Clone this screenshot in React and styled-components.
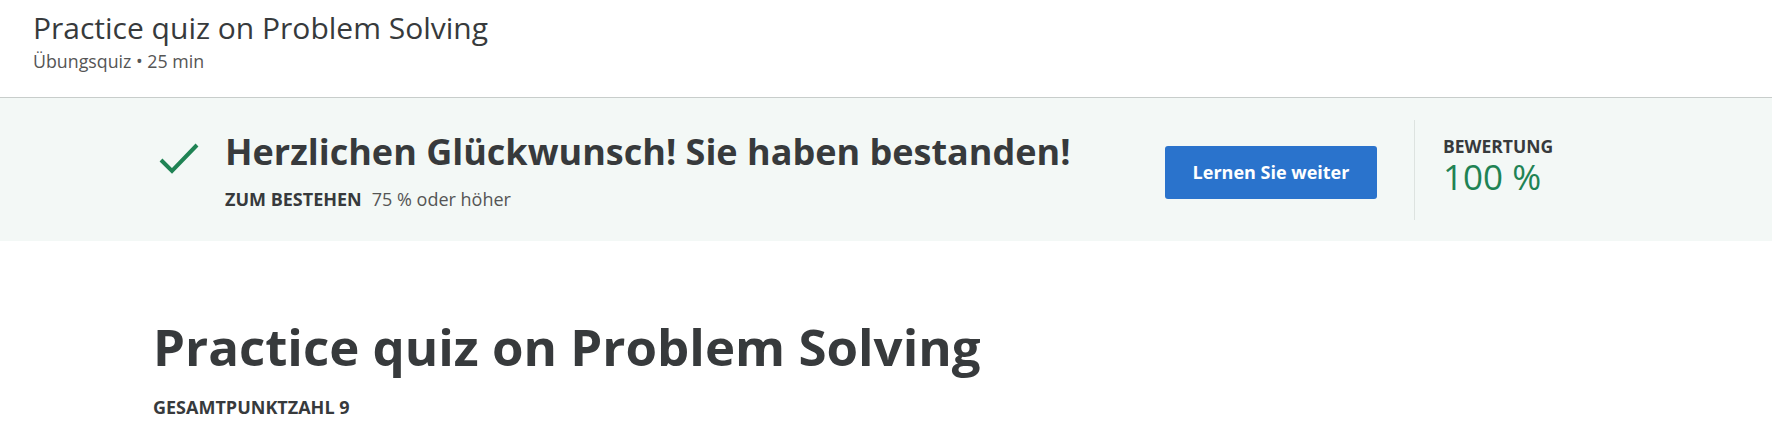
import React from 'react';
import styled, { createGlobalStyle } from 'styled-components';

const GlobalStyle = createGlobalStyle`
  html, body {
    margin: 0;
    padding: 0;
    background: #fff;
    font-family: "Open Sans", "Liberation Sans", sans-serif;
    color: #373a3c;
  }
`;

const Header = styled.header`
  padding: 10px 33px 24px;
  border-bottom: 1px solid #c8cdcb;
`;

const HeaderTitle = styled.h1`
  margin: 0;
  font-size: 30px;
  line-height: 36px;
  font-weight: 400;
  color: #373a3c;
`;

const HeaderMeta = styled.div`
  margin-top: 3px;
  font-size: 17.8px;
  line-height: 24px;
  color: #555;
`;

const Banner = styled.section`
  background: #f3f8f6;
  height: 143px;
  display: flex;
  align-items: center;
`;

const Container = styled.div`
  width: 1466px;
  margin: 0 auto;
  display: flex;
  align-items: center;
`;

const Result = styled.div`
  flex: 1;
  display: flex;
  align-items: flex-start;
  gap: 25px;
  padding-left: 5px;
`;

const CheckIcon = styled.svg`
  width: 42px;
  height: 34px;
  margin-top: 11px;
  flex-shrink: 0;
`;

const ResultTitle = styled.h2`
  margin: 0;
  font-size: 36px;
  line-height: 44px;
  font-weight: 700;
  color: #373a3c;
`;

const PassLine = styled.div`
  margin-top: 14px;
  font-size: 18px;
  line-height: 22px;
  color: #555;
`;

const Label = styled.span`
  font-weight: 700;
  text-transform: uppercase;
  color: #373a3c;
  margin-right: ${p => p.$gap || 0}px;
`;

const Actions = styled.div`
  display: flex;
  align-items: center;
`;

const Button = styled.button`
  font-family: inherit;
  font-size: 18px;
  font-weight: 700;
  color: #fff;
  background: #2a73cc;
  border: none;
  border-radius: 3px;
  width: 212px;
  height: 53px;
  margin-top: 5px;
  cursor: pointer;
`;

const Score = styled.div`
  margin-left: 37px;
  width: 205px;
  height: 100px;
  box-sizing: border-box;
  border-left: 1px solid #dde3e0;
  padding: 15px 0 0 28px;
`;

const ScoreLabel = styled.div`
  font-size: 17.5px;
  line-height: 22px;
  font-weight: 700;
  color: #373a3c;
  white-space: nowrap;
`;

const ScoreValue = styled.div`
  font-size: 35px;
  line-height: 40px;
  color: #1f8354;
  white-space: nowrap;
`;

const Main = styled.main`
  width: 1466px;
  margin: 0 auto;
  padding-top: 75px;
`;

const MainTitle = styled.h1`
  margin: 0;
  font-size: 51px;
  line-height: 60px;
  font-weight: 700;
  color: #373a3c;
`;

const Total = styled.div`
  margin-top: 19px;
  font-size: 18px;
  line-height: 24px;
  font-weight: 700;
  color: #373a3c;
`;

const App = () => {
  return (
    <>
      <GlobalStyle />
      <Header>
        <HeaderTitle>Practice quiz on Problem Solving</HeaderTitle>
        <HeaderMeta>Übungsquiz • 25 min</HeaderMeta>
      </Header>

      <Banner>
        <Container>
          <Result>
            <CheckIcon viewBox="0 0 42 34">
              <path d="M3 19 L14 30 L39 4" fill="none" stroke="#1f8354" strokeWidth="4" />
            </CheckIcon>
            <div>
              <ResultTitle>Herzlichen Glückwunsch! Sie haben bestanden!</ResultTitle>
              <PassLine>
                <Label $gap={10}>Zum Bestehen</Label>75 % oder höher
              </PassLine>
            </div>
          </Result>
          <Actions>
            <Button>Lernen Sie weiter</Button>
            <Score>
              <ScoreLabel>BEWERTUNG</ScoreLabel>
              <ScoreValue>100 %</ScoreValue>
            </Score>
          </Actions>
        </Container>
      </Banner>

      <Main>
        <MainTitle>Practice quiz on Problem Solving</MainTitle>
        <Total>GESAMTPUNKTZAHL 9</Total>
      </Main>
    </>
  );
};

export default App;
